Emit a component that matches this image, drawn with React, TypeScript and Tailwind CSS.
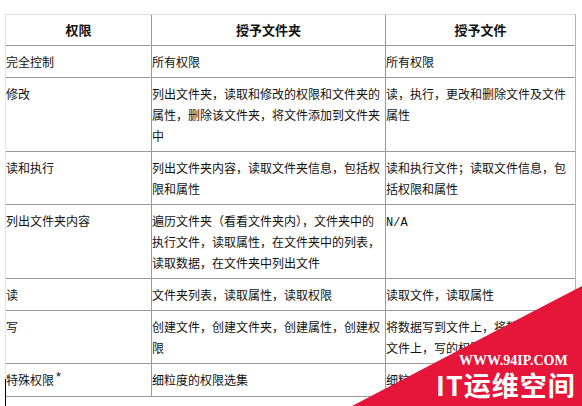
const rows: [string, string, string][] = [
  ['完全控制', '所有权限', '所有权限'],
  [
    '修改',
    '列出文件夹，读取和修改的权限和文件夹的属性，删除该文件夹，将文件添加到文件夹中',
    '读，执行，更改和删除文件及文件属性',
  ],
  [
    '读和执行',
    '列出文件夹内容，读取文件夹信息，包括权限和属性',
    '读和执行文件；读取文件信息，包括权限和属性',
  ],
  [
    '列出文件夹内容',
    '遍历文件夹（看看文件夹内），文件夹中的执行文件，读取属性，在文件夹中的列表，读取数据，在文件夹中列出文件',
    'N/A',
  ],
  ['读', '文件夹列表，读取属性，读取权限', '读取文件，读取属性'],
  [
    '写',
    '创建文件，创建文件夹，创建属性，创建权限',
    '将数据写到文件上，将数据附加到文件上，写的权限和属性',
  ],
  ['特殊权限', '细粒度的权限选集', '细粒度的权限选集'],
];

const cell = 'border-b border-[#9a9a9a] py-[5px] leading-[21px]';

export default function App() {
  return (
    <div className="relative w-[582px] h-[406px] overflow-hidden bg-white text-[12px] text-[#111] [font-family:'Noto_Sans_CJK_SC',sans-serif]">
      <div className="pt-[14px] pl-[5px]">
        <div className="grid w-[571px] grid-cols-[145px_234px_190px] border-t border-t-[#dcdcdc] border-l border-l-[#e4e4e4] border-r border-r-[#b4b4b4]">
          {/* header */}
          <div className="h-[31px] flex items-center justify-center border-b border-[#9a9a9a] text-[13px] font-bold">
            权限
          </div>
          <div className="h-[31px] flex items-center justify-center border-b border-l border-[#9a9a9a] text-[13px] font-bold">
            授予文件夹
          </div>
          <div className="h-[31px] flex items-center justify-center border-b border-l border-[#9a9a9a] text-[13px] font-bold">
            授予文件
          </div>

          {rows.map(([perm, folder, file]) => (
            <div key={perm} className="contents">
              <div className={cell}>
                {perm}
                {perm === '特殊权限' && (
                  <span className="relative top-[-4px] ml-[2px] text-[13px] [font-family:'Liberation_Sans',sans-serif]">
                    *
                  </span>
                )}
              </div>
              <div className={`${cell} border-l`}>{folder}</div>
              <div className={`${cell} border-l`}>
                {file === 'N/A' ? (
                  <span className="text-[12px] [font-family:'Liberation_Mono',monospace]">N/A</span>
                ) : (
                  file
                )}
              </div>
            </div>
          ))}
        </div>
      </div>

      {/* text cursor */}
      <div className="absolute left-[5px] top-[379px] w-px h-[27px] bg-black" />

      {/* watermark */}
      <svg className="absolute left-0 top-0" width="582" height="406" viewBox="0 0 582 406">
        <polygon points="352,406 582,286 582,406" fill="#e5163a" />
      </svg>
      <div className="absolute left-[436px] top-[354px] flex flex-col gap-[3px] text-white">
        <div className="ml-[23px] h-[14px] text-[14px] font-bold leading-none [font-family:'Liberation_Serif',serif]">
          WWW.94IP.COM
        </div>
        <div className="h-[27px] text-[27px] font-bold leading-none tracking-[1px]">IT运维空间</div>
      </div>
    </div>
  );
}
